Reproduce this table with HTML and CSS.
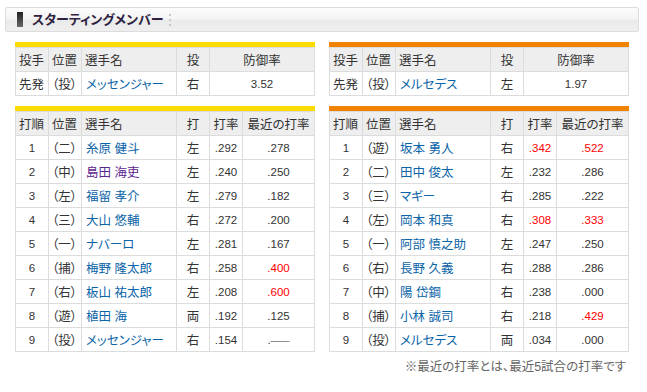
FILE: index.html
```html
<!DOCTYPE html>
<html lang="ja">
<head>
<meta charset="utf-8">
<title>スターティングメンバー</title>
<link rel="stylesheet" href="styles.css">
</head>
<body>
<div class="title-bar">
  <span class="mark"></span>
  <h2 class="title">スターティングメンバー</h2>
  <span class="dots"></span>
</div>
<div class="teams">
  <section class="team">
    <div class="bar yellow"></div>
    <table class="tbl">
      <colgroup><col class="c33"><col class="c33"><col class="c95"><col class="c33"><col></colgroup>
      <thead><tr><th class="l">投手</th><th class="l">位置</th><th class="l">選手名</th><th>投</th><th>防御率</th></tr></thead>
      <tbody><tr><td class="l">先発</td><td class="l">（投）</td><td class="l name"><a href="#">メッセンジャー</a></td><td>右</td><td class="num">3.52</td></tr></tbody>
    </table>
    <div class="bar yellow sep"></div>
    <table class="tbl">
      <colgroup><col class="c33"><col class="c33"><col class="c95"><col class="c33"><col class="c33"><col></colgroup>
      <thead><tr><th class="l">打順</th><th class="l">位置</th><th class="l">選手名</th><th>打</th><th>打率</th><th>最近の打率</th></tr></thead>
      <tbody>
        <tr><td class="num">1</td><td class="l">（二）</td><td class="l name"><a href="#">糸原 健斗</a></td><td>左</td><td class="num">.292</td><td class="num">.278</td></tr>
        <tr><td class="num">2</td><td class="l">（中）</td><td class="l name"><a href="#" class="visited">島田 海吏</a></td><td>左</td><td class="num">.240</td><td class="num">.250</td></tr>
        <tr><td class="num">3</td><td class="l">（左）</td><td class="l name"><a href="#">福留 孝介</a></td><td>左</td><td class="num">.279</td><td class="num">.182</td></tr>
        <tr><td class="num">4</td><td class="l">（三）</td><td class="l name"><a href="#">大山 悠輔</a></td><td>右</td><td class="num">.272</td><td class="num">.200</td></tr>
        <tr><td class="num">5</td><td class="l">（一）</td><td class="l name"><a href="#">ナバーロ</a></td><td>左</td><td class="num">.281</td><td class="num">.167</td></tr>
        <tr><td class="num">6</td><td class="l">（捕）</td><td class="l name"><a href="#">梅野 隆太郎</a></td><td>右</td><td class="num">.258</td><td class="num hot">.400</td></tr>
        <tr><td class="num">7</td><td class="l">（右）</td><td class="l name"><a href="#">板山 祐太郎</a></td><td>左</td><td class="num">.208</td><td class="num hot">.600</td></tr>
        <tr><td class="num">8</td><td class="l">（遊）</td><td class="l name"><a href="#">植田 海</a></td><td>両</td><td class="num">.192</td><td class="num">.125</td></tr>
        <tr><td class="num">9</td><td class="l">（投）</td><td class="l name"><a href="#">メッセンジャー</a></td><td>右</td><td class="num">.154</td><td class="num">.<span class="dash">——</span></td></tr>
      </tbody>
    </table>
  </section>
  <section class="team">
    <div class="bar orange"></div>
    <table class="tbl">
      <colgroup><col class="c33"><col class="c33"><col class="c95"><col class="c33"><col></colgroup>
      <thead><tr><th class="l">投手</th><th class="l">位置</th><th class="l">選手名</th><th>投</th><th>防御率</th></tr></thead>
      <tbody><tr><td class="l">先発</td><td class="l">（投）</td><td class="l name"><a href="#">メルセデス</a></td><td>左</td><td class="num">1.97</td></tr></tbody>
    </table>
    <div class="bar orange sep"></div>
    <table class="tbl">
      <colgroup><col class="c33"><col class="c33"><col class="c95"><col class="c33"><col class="c33"><col></colgroup>
      <thead><tr><th class="l">打順</th><th class="l">位置</th><th class="l">選手名</th><th>打</th><th>打率</th><th>最近の打率</th></tr></thead>
      <tbody>
        <tr><td class="num">1</td><td class="l">（遊）</td><td class="l name"><a href="#">坂本 勇人</a></td><td>右</td><td class="num hot">.342</td><td class="num hot">.522</td></tr>
        <tr><td class="num">2</td><td class="l">（二）</td><td class="l name"><a href="#">田中 俊太</a></td><td>左</td><td class="num">.232</td><td class="num">.286</td></tr>
        <tr><td class="num">3</td><td class="l">（三）</td><td class="l name"><a href="#">マギー</a></td><td>右</td><td class="num">.285</td><td class="num">.222</td></tr>
        <tr><td class="num">4</td><td class="l">（左）</td><td class="l name"><a href="#">岡本 和真</a></td><td>右</td><td class="num hot">.308</td><td class="num hot">.333</td></tr>
        <tr><td class="num">5</td><td class="l">（一）</td><td class="l name"><a href="#">阿部 慎之助</a></td><td>左</td><td class="num">.247</td><td class="num">.250</td></tr>
        <tr><td class="num">6</td><td class="l">（右）</td><td class="l name"><a href="#">長野 久義</a></td><td>右</td><td class="num">.288</td><td class="num">.286</td></tr>
        <tr><td class="num">7</td><td class="l">（中）</td><td class="l name"><a href="#">陽 岱鋼</a></td><td>右</td><td class="num">.238</td><td class="num">.000</td></tr>
        <tr><td class="num">8</td><td class="l">（捕）</td><td class="l name"><a href="#">小林 誠司</a></td><td>右</td><td class="num">.218</td><td class="num hot">.429</td></tr>
        <tr><td class="num">9</td><td class="l">（投）</td><td class="l name"><a href="#">メルセデス</a></td><td>両</td><td class="num">.034</td><td class="num">.000</td></tr>
      </tbody>
    </table>
    <p class="note">※最近の打率とは、最近5試合の打率です</p>
  </section>
</div>
</body>
</html>
```
FILE: styles.css
```css
html, body {
  margin: 0;
  padding: 0;
  background: #fff;
}
body {
  font-family: "Liberation Sans", "Noto Sans CJK JP", sans-serif;
  font-size: 12.5px;
  color: #333;
  font-feature-settings: "palt";
}
.title-bar {
  box-sizing: border-box;
  height: 25px;
  margin: 7px 8px 0 5px;
  border: 1px solid #dcdcdc;
  border-radius: 2px;
  background: linear-gradient(#fcfcfc, #f3f3f3 50%, #eaeaea 51%, #efefef);
  display: flex;
  align-items: center;
  padding-left: 11px;
}
.mark {
  width: 6px;
  height: 15px;
  background: linear-gradient(#222, #666);
}
.title {
  margin: 0 0 0 9px;
  font-size: 13px;
  font-weight: bold;
  color: #2d2340;
  line-height: 1;
}
.dots {
  width: 2px;
  height: 12px;
  margin-left: 6px;
  background: repeating-linear-gradient(#c8c8c8 0 2px, transparent 2px 5px);
}
.teams {
  display: flex;
  gap: 14px;
  margin-top: 10px;
  padding-left: 15px;
}
.team {
  width: 300px;
}
.bar {
  height: 5px;
}
.bar.sep {
  margin-top: 10px;
}
.yellow { background: #ffdc00; }
.orange { background: #f08300; }
.tbl {
  width: 300px;
  table-layout: fixed;
  border-collapse: separate;
  border-spacing: 0;
  border-left: 1px solid #dcdcdc;
  border-top: 1px solid #dcdcdc;
}
.c33 { width: 33px; }
.c95 { width: 95px; }
.tbl th, .tbl td {
  box-sizing: border-box;
  height: 24px;
  padding: 0 3px;
  border-right: 1px solid #dcdcdc;
  border-bottom: 1px solid #dcdcdc;
  text-align: center;
  vertical-align: middle;
  white-space: nowrap;
  font-weight: normal;
  overflow: hidden;
}
.tbl th {
  background: #eeeeee;
}
.tbl .l { text-align: left; }
.tbl .name { padding-left: 4px; }
.tbl .num { font-size: 11.5px; }
.tbl .dash { font-size: 9.5px; }
.tbl .hot { color: #ff0000; }
.tbl a {
  color: #0a64a8;
  text-decoration: none;
}
.tbl a.visited { color: #5c2490; }
.note {
  margin: 4px 3px 0 0;
  text-align: right;
  color: #666;
  font-size: 12.5px;
}
```
